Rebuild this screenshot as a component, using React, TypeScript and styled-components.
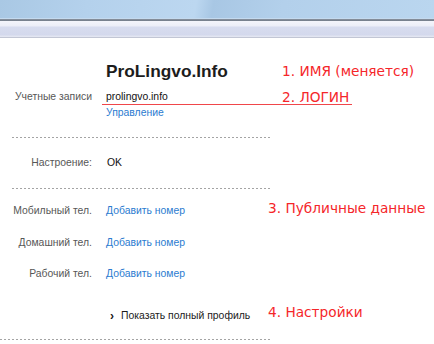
import styled, { createGlobalStyle } from "styled-components";

const GlobalStyle = createGlobalStyle`
    html, body {
        margin: 0;
        padding: 0;
        background: #fff;
    }
    body {
        width: 434px;
        height: 344px;
        overflow: hidden;
        font-family: "Liberation Sans", Arial, sans-serif;
    }
`

const TitleBar = styled.div`
    height: 18px;
    background: linear-gradient(100deg, #a9c8e4 0%, #b4d1ec 20%, #bcd7f0 45%, #a8c7e4 49%, #b3d0eb 65%, #bad6ef 100%);
    border-bottom: 1px solid #c4daef;
`

const DarkLine = styled.div`
    height: 2px;
    background: linear-gradient(#8a939f, #737c89);
`

const Toolbar = styled.div`
    height: 16px;
    background: linear-gradient(#f4f5fb 0, #eceef8 5px, #d7dcef 6px, #d3d8ec 14px, #e2e5f1 15px, #e2e5f1 16px);
    border-bottom: 1px solid #c2c6d4;
`

const Content = styled.div`
    width: 270px;
    padding-top: 23px;
    display: flex;
    flex-direction: column;
`

const Row = styled.div<{ top?: number }>`
    position: relative;
    display: flex;
    align-items: center;
    margin-top: ${props => props.top ?? 0}px;
    height: 14px;
    font-size: 10.4px;
    line-height: 14px;
`

const TitleRow = styled(Row)`
    height: 20px;
    line-height: 20px;
`

const Label = styled.div`
    width: 92px;
    flex: none;
    text-align: right;
    color: #575757;
    white-space: nowrap;
`

const Value = styled.div<{ shift?: number }>`
    margin-left: ${props => 14 + (props.shift ?? 0)}px;
    color: #111;
    white-space: nowrap;
`

const Title = styled(Value)`
    font-size: 17.3px;
    font-weight: bold;
    color: #1c1c1c;
`

const Link = styled(Value)`
    color: #2b7bd0;
`

const Expander = styled(Value)`
    display: flex;
    align-items: center;
    gap: 7px;
    color: #1a1a1a;
`

const Chevron = styled.span`
    font-size: 12px;
    font-weight: bold;
    width: 4px;
`

const Separator = styled.div<{ top: number, inset: number }>`
    height: 1px;
    margin-top: ${props => props.top}px;
    margin-left: ${props => props.inset}px;
    background-image: repeating-linear-gradient(to right, #a4a4a4 0 2px, transparent 2px 4px);
`

const Note = styled.div<{ left: number, top: number }>`
    position: absolute;
    left: ${props => props.left}px;
    top: ${props => props.top}px;
    font-family: "DejaVu Sans", sans-serif;
    font-size: 13.7px;
    line-height: 16px;
    color: #f5262a;
    white-space: nowrap;
`

const RedLine = styled.div`
    position: absolute;
    left: 102px;
    top: 14px;
    width: 250px;
    height: 1px;
    background: #f0464a;
`

const phones = [
    { label: "Мобильный тел.", top: 15, note: "3. Публичные данные" },
    { label: "Домашний тел.", top: 18 },
    { label: "Рабочий тел.", top: 17 },
]

export default function App() {
    return <>
        <GlobalStyle />
        <TitleBar />
        <DarkLine />
        <Toolbar />
        <Content>
            <TitleRow>
                <Label />
                <Title>ProLingvo.Info</Title>
                <Note left={282} top={2}>1. ИМЯ (меняется)</Note>
            </TitleRow>
            <Row top={9}>
                <Label>Учетные записи</Label>
                <Value>prolingvo.info</Value>
                <RedLine />
                <Note left={282} top={-1}>2. ЛОГИН</Note>
            </Row>
            <Row top={2}>
                <Label />
                <Link>Управление</Link>
            </Row>
            <Separator top={17} inset={12} />
            <Row top={18}>
                <Label>Настроение:</Label>
                <Value shift={1}>OK</Value>
            </Row>
            <Separator top={18} inset={12} />
            {phones.map(phone =>
                <Row key={phone.label} top={phone.top}>
                    <Label>{phone.label}</Label>
                    <Link>Добавить номер</Link>
                    {phone.note && <Note left={268} top={-4}>{phone.note}</Note>}
                </Row>
            )}
            <Row top={28}>
                <Label />
                <Expander shift={4}>
                    <Chevron>›</Chevron>
                    Показать полный профиль
                </Expander>
                <Note left={268} top={-5}>4. Настройки</Note>
            </Row>
            <Separator top={16} inset={0} />
        </Content>
    </>
}
